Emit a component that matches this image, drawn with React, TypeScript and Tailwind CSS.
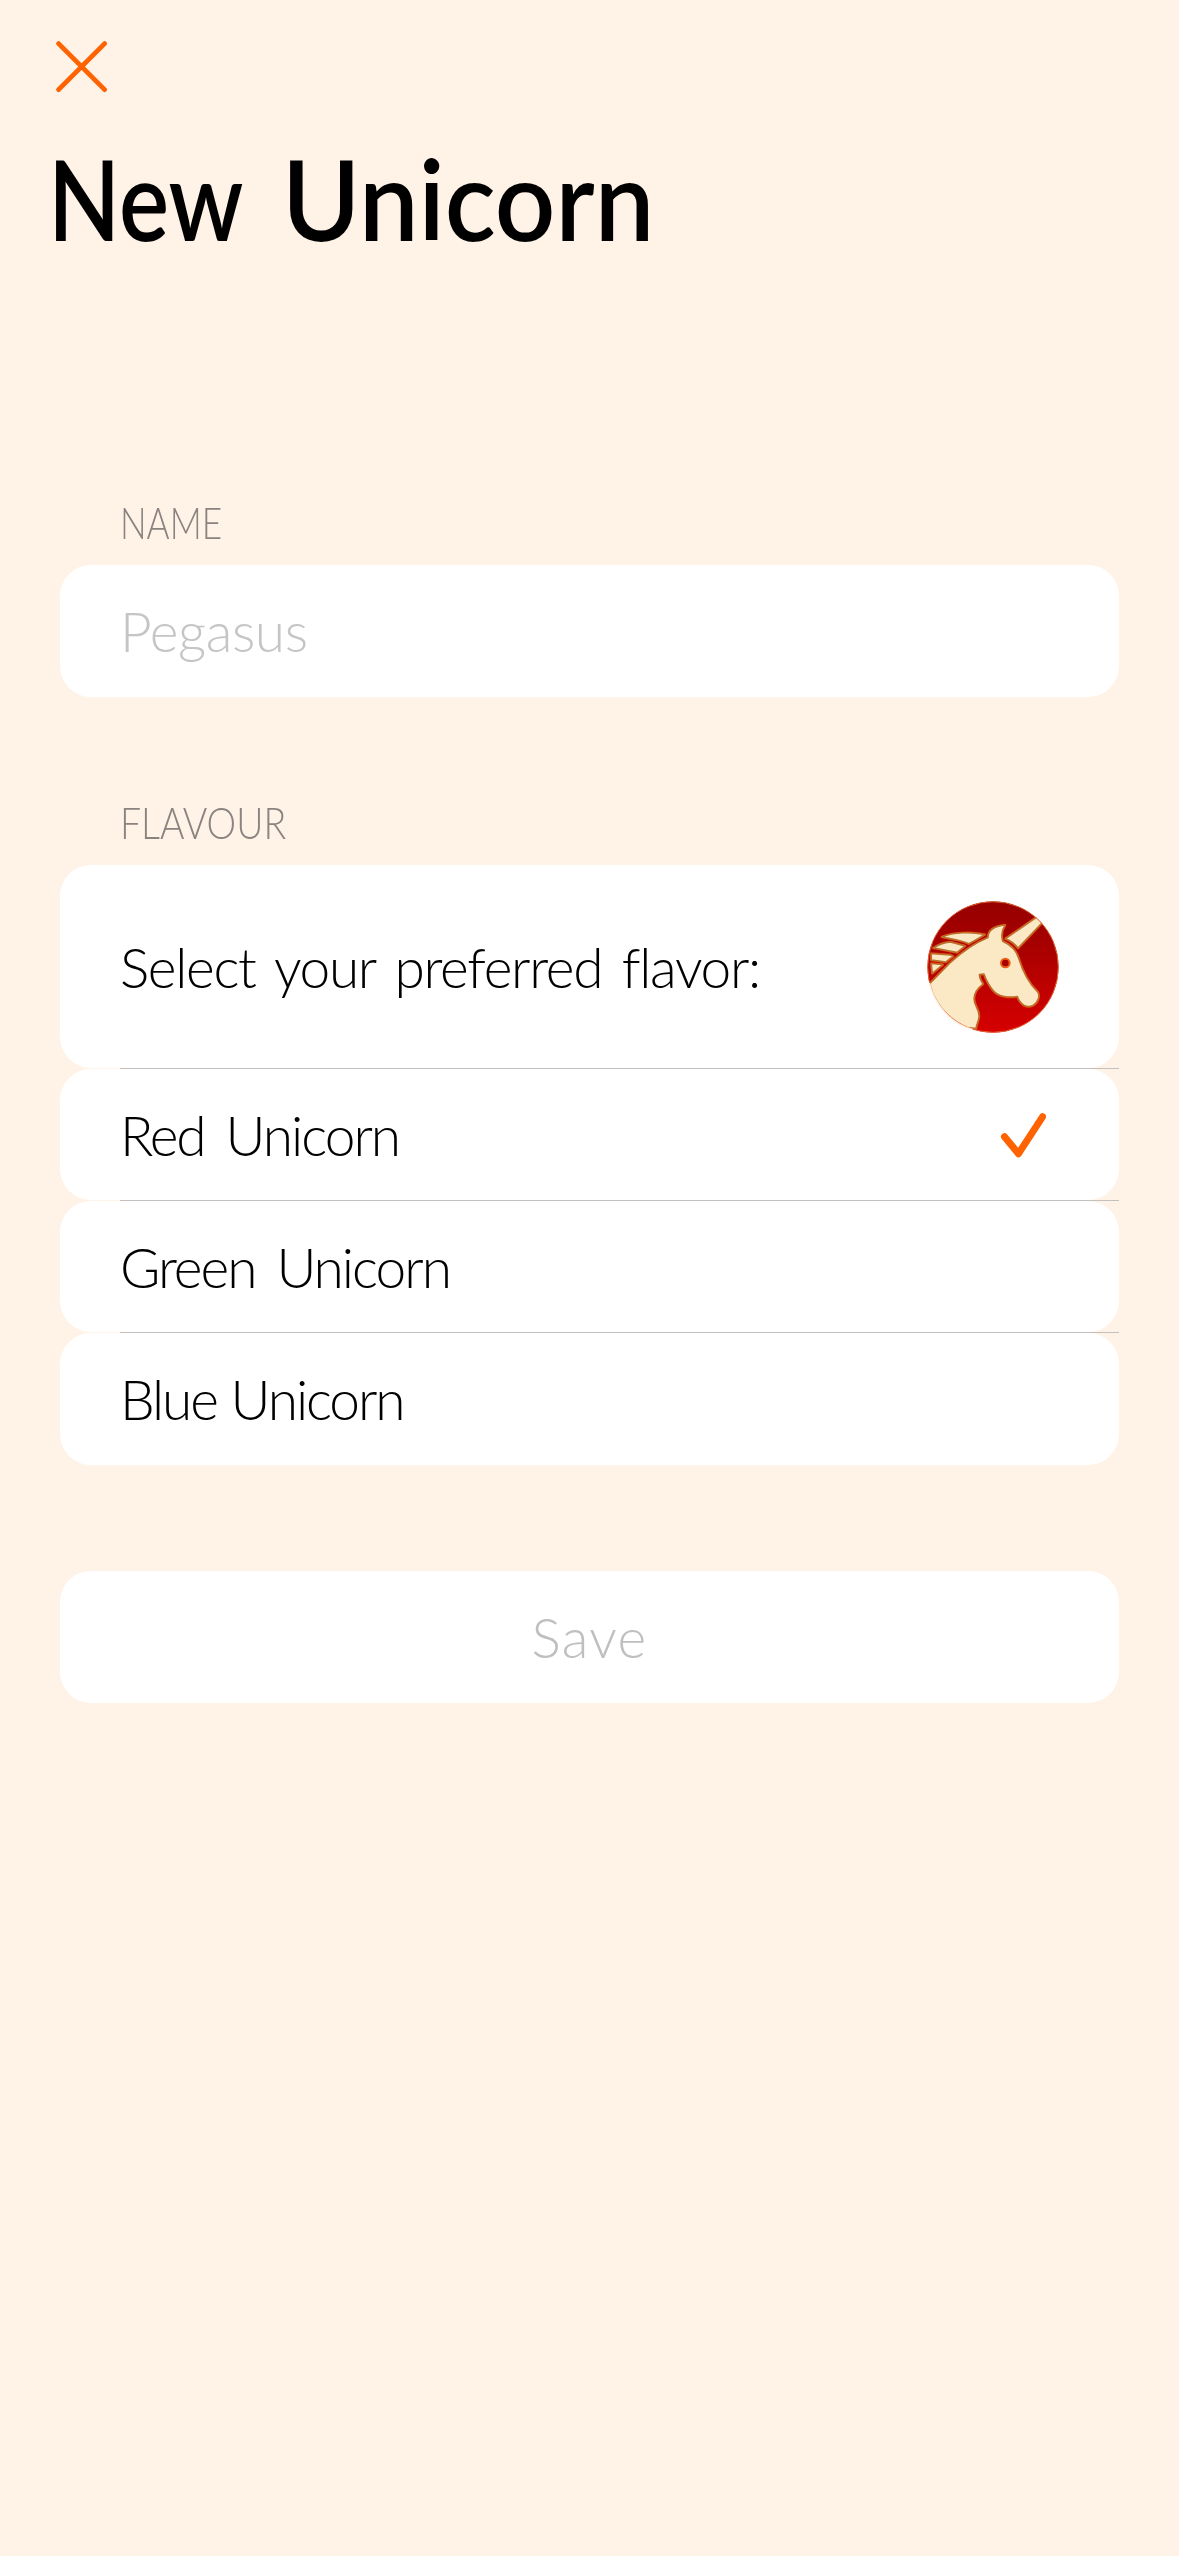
import type { ReactNode } from "react";

function CloseIcon() {
  return (
    <svg viewBox="0 0 52 52" className="block h-[52px] w-[52px]" fill="none" stroke="#ff6200" strokeWidth="4.8" strokeLinecap="round">
      <path d="M2.6 2.6L48.6 48.6M48.6 2.6L2.6 48.6" />
    </svg>
  );
}

function CheckIcon() {
  return (
    <svg viewBox="0 0 46 46" className="block h-[46px] w-[46px]" fill="none" stroke="#ff6200" strokeWidth="7" strokeLinecap="round" strokeLinejoin="round">
      <path d="M4.5 24.7L18.5 41.7L42.5 4.8" />
    </svg>
  );
}

function UnicornIcon() {
  return (
    <svg viewBox="81 62 396 396" className="block h-[132px] w-[132px]">
      <defs>
        <linearGradient id="red" x1="0" y1="0" x2="0" y2="1">
          <stop offset="0" stopColor="#960000" />
          <stop offset="0.35" stopColor="#a80000" />
          <stop offset="1" stopColor="#d60000" />
        </linearGradient>
        <clipPath id="disc">
          <circle cx="279" cy="260" r="197" />
        </clipPath>
        <filter id="soft" x="-10%" y="-10%" width="120%" height="120%">
          <feGaussianBlur stdDeviation="2.2" />
        </filter>
        <g id="horse">
          <path d="M72 330L98 301L150 248C185 216 225 188 264 172C264 152 280 138 315 134C306 148 302 165 308 183C330 193 348 208 355 232C366 268 387 311 413 335C421 347 413 368 399 375C381 384 362 375 352 348C328 352 296 350 281 332C267 316 259 300 252 281L238 282C238 293 243 303 249 311C230 325 222 339 222 356C222 375 237 385 237 407C237 421 229 431 228 444L210 442L190 470L60 420Z" />
          <path d="M126 170C160 156 213 154 254 163C236 174 220 183 207 190C182 179 153 175 126 170Z" />
          <path d="M100 203C116 192 131 187 151 185L195 197L171 216C146 212 122 206 100 203Z" />
          <path d="M94 220L151 224L159 228L137 245L94 239Z" />
          <path d="M94 250L128 253L97 279Z" />
          <path d="M317 175L418 105L432 121L354 203C344 190 332 181 317 175Z" />
        </g>
      </defs>
      <g clipPath="url(#disc)">
        <circle cx="279" cy="260" r="198" fill="url(#red)" />
        <use href="#horse" fill="#ec5410" stroke="#e84b0c" strokeWidth="8" strokeLinejoin="round" />
        <use href="#horse" fill="#fae9c4" stroke="#b5712f" strokeWidth="4" strokeLinejoin="round" filter="url(#soft)" />
        <circle cx="316" cy="248" r="13" fill="#a80000" stroke="#ee5f19" strokeWidth="6" />
      </g>
      <circle cx="279" cy="260" r="196" fill="none" stroke="#e8763c" strokeWidth="2.5" />
      <path d="M88 308C103 370 150 432 218 447" fill="none" stroke="#fdf1e6" strokeWidth="4" />
    </svg>
  );
}

function SectionLabel({ children }: { children: ReactNode }) {
  return <div className="h-[52px] pl-[60px] text-[43px] leading-[52px] text-[#8a8380]">{children}</div>;
}

const card = "flex items-center rounded-[31px] bg-white px-[60px] text-[55px] leading-[66px]";

function Divider() {
  return <div className="ml-[60px] h-px bg-[#c3c0c0]" />;
}

export default function App() {
  return (
    <main className="flex min-h-[2556px] w-[1179px] flex-col bg-[#fff2e6] px-[60px] pt-[41px] font-['Lato',sans-serif] font-light text-black">
      <button className="-ml-1 h-[52px] w-[52px]" aria-label="Close">
        <CloseIcon />
      </button>

      <h1 className="-ml-[12px] mt-[38px] flex h-[134px] text-[111px] leading-[134px] font-semibold whitespace-nowrap">
        <span className="w-[234px] origin-left scale-x-[0.85]">New</span>
        <span className="origin-left scale-x-[0.957]">Unicorn</span>
      </h1>

      <section className="mt-[232px]">
        <SectionLabel>
          <span className="inline-block origin-left scale-x-[0.82]">NAME</span>
        </SectionLabel>
        <div className={card + " mt-[16px] h-[132px] text-[#c5c5c7]"}>
          <span className="tracking-[-0.4px]">Pegasus</span>
        </div>
      </section>

      <section className="mt-[100px]">
        <SectionLabel>
          <span className="inline-block origin-left scale-x-[0.87]">FLAVOUR</span>
        </SectionLabel>
        <div className={card + " mt-[16px] h-[203px] justify-between"}>
          <span className="tracking-[-1.3px] [word-spacing:6px]">Select your preferred flavor:</span>
          <UnicornIcon />
        </div>
        <Divider />
        <div className={card + " h-[131px] justify-between pr-[73px]"}>
          <span className="tracking-[-2px] [word-spacing:8px]">Red Unicorn</span>
          <CheckIcon />
        </div>
        <Divider />
        <div className={card + " h-[131px]"}>
          <span className="tracking-[-2px] [word-spacing:8px]">Green Unicorn</span>
        </div>
        <Divider />
        <div className={card + " h-[132px]"}>
          <span className="tracking-[-2.1px] [word-spacing:1px]">Blue Unicorn</span>
        </div>
      </section>

      <button className={card + " mt-[106px] h-[132px] justify-center text-[#bfbfbf]"}>
        <span className="tracking-[1.3px]">Save</span>
      </button>
    </main>
  );
}
